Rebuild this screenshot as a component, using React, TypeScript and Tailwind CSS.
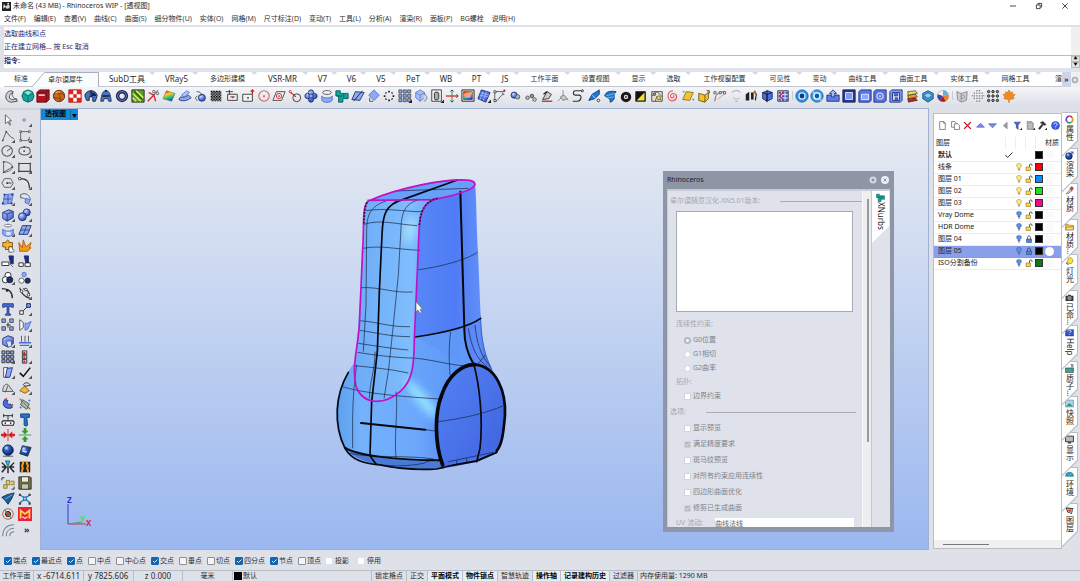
import { useState } from "react";
import clsx from "clsx";

// [path, fill, stroke, stroke width]
type Shape = [string, string, string?, number?];
type IconSet = Record<string, Shape[]>;

const N = "none";
const K = "#222";
const B = "#4a6fd8";
const L = "#8fa9f0";
const D = "#1c2f7a";
const R = "#d8202a";
const G = "#777d88";
const Y = "#f4c430";
const BALL = "url(#ball)";
const BOX = "url(#box)";

const c = (x: number, y: number, r: number) =>
    `M${x - r} ${y}a${r} ${r} 0 1 0 ${2 * r} 0a${r} ${r} 0 1 0 ${-2 * r} 0z`;

const dots = (xs: number[], ys: number[], s: number) =>
    ys.map((y) => xs.map((x) => `M${x} ${y}h${s}v${s}h${-s}z`).join("")).join("");

const TOP_MAIN: IconSet = {
    horn: [["M8 2C3 2 1 5 1 9s3 6 7 6l6-1-1-3-4 1c-3 0-4-1-4-3s1-4 4-4z", "#cdd0d6", "#444"], ["M10 3C7 4 7 9 13 12", N, "#555"]],
    gem: [["M8 1l5 2 2 5-2 5-5 2-5-2-2-5 2-5z", "#17a398", "#0b5d5a"], ["M3 5l5 3 6-3M8 8v7", N, "#0d6f6a"], ["M8 2l4 2-4 3-4-3z", "#7fe8dd"]],
    redbox: [["M1 4l3-3h11v11l-3 3H1z", "#b3121f", "#5e0810"], ["M1 4h11v11M12 4l3-3", N, "#6e0a12"], ["M3 7h7", N, "#fff", 1.5]],
    basketball: [[c(8, 8, 6.5), "#c9681e", "#5b2c0a"], ["M2 6c4-2 8-2 12 1M6 2c3 4 4 8 3 12M2 10c4 0 8 1 10 3", N, "#7a3a0e"], ["M4 5c2-2 4-2 5-1", N, "#f0a860", 1.4]],
    checker: [["M1 1h14v14H1z", "#fff", "#900", 1], [dots([1, 10], [1, 10], 5) + dots([6], [6], 4), "#e0231c"]],
    umbrella: [["M1 8c0-4 4-6 7-6s7 2 7 6l-2 6h-3V9H6v4H3z", "#3f74c9", K], ["M8 2v7", N, K, 1.5], ["M9 4c3 0 5 2 5 4H9z", "#142056"]],
    bell: [["M8 2c4 0 5 4 6 12h-3l-1-3H6l-1 3H2C3 6 4 2 8 2z", "#4b78b8", D], ["M4 8h8", N, "#111", 1.5], [c(8, 2, 1.2), "#123"]],
    ring: [[c(8, 8, 5), N, "#1a2352", 4], [c(8, 8, 5), N, "#7b90d6", 1]],
    stripes: [["M1 1h14v14H1z", "#5a9e2d", "#222"], ["M2 5l9 9M2 10l4 4M6 2l8 8", N, "#e8f26a", 1.5], ["M4 3l9 9", N, "#111", 1]],
    scissors: [["M2 14L9 7l2 7M9 7L3 4", N, R, 1.5], ["M9 7l5-6", N, "#555"], [c(9, 3, 1.5), N, "#555"], [c(13, 5, 1.5), N, "#555"]],
    rainbow: [["M5 2l10 3-4 9L1 11z", "url(#spectrum)", "#555", 0.5]],
    ribbon: [["M1 12c5 3 10 1 14-2l-3-3c-3 2-6 3-9 2z", L, D], ["M4 7l6-5 3 2-6 5z", "#b9c7f5", B]],
    orbit: [[c(9, 10, 4), BALL, D], ["M3 3c4 0 6 2 5 5M4 13c-3-1-3-4 0-5", N, "#444"]],
    weave: [["M2 2h12v12H2z", "#999"], [dots([2, 5, 8, 11], [2, 5, 8, 11], 1.7), "#111"], [dots([3.5, 6.5, 9.5, 12.5], [3.5, 6.5, 9.5, 12.5], 1.5), "#333"]],
    frame: [["M3 6h11v7H3z", "#eee", "#333"], ["M1 3h8M5 1v5M6 9h5", N, "#333"], [c(9, 9.5, 1), R]],
    extrude: [["M2 6h11v8H2z", "#f4f4f4", "#333"], ["M13 6V1M11 3l2-2 2 2", N, R, 1.5], [c(8, 10, 1), K]],
    circle: [[c(8, 8, 6), N, "#c66", 1.2], [c(8, 8, 1), R]],
    diamond: [["M5 3h10l-4 10H1z", "#eee", "#444"], [c(8, 8, 3), N, R], [c(8, 8, 1), R]],
    tangent: [[c(10, 10, 4.5), N, "#333"], ["M2 3l7 6", N, R, 1.5], [c(2.5, 3, 1.3), "#fff", R]],
    flower: [[c(8, 4, 3) + c(4, 8, 3) + c(12, 8, 3) + c(8, 12, 3), BALL, D], [c(8, 8, 2.5), L, D]],
    cylinder: [["M2 8v5c2 3 10 3 12 0V8c-2 3-10 3-12 0z", L, B], ["M3 4c0-3 10-3 10 0s-10 3-10 0z", N, "#555"]],
    pipe: [["M1 2h5v3h9v6H9v4H4V8H1z", "#0fa39b", "#0a5a55"], ["M10 5v5M2 8h6", N, "#0a5a55"]],
    surface: [["M5 3l10 1-5 9L1 12z", L, D], ["M3 14L13 2", N, K, 1]],
    rhomb: [["M8 1l6 6-6 6-6-6z", L, B], ["M3 10v4h4", N, "#444"]],
    ringdots: [["M8 2v2M8 12v2M2 8h2M12 8h2M4 4l1 1M11 11l1 1M12 4l-1 1M4 12l1-1", N, "#222", 2]],
    grid: [[dots([1, 6, 11], [1, 6, 11], 3.5), L, "#333", 0.8], ["M16 12v4h-4z", K]],
    globe: [["M2 4l5-3 5 3v6l-5 4-5-4z", "#aebdf3", B, 0.9], ["M2 4l5 3 5-3M7 7v7", N, B, 0.8], ["M11 6c5 0 5 8 0 8", "#cfd6ee", G]],
    document: [["M2 1h11v13H2z", "#f6f6f6", "#333"], ["M5 5c0-2 5-2 5 0v6c0 2-5 2-5 0z", "#aaa", "#222"], ["M16 12v4h-4z", K]],
    cross: [["M8 1v14", N, "#3aa33a", 1.2], ["M1 8h14", N, R, 1.4], ["M6 3l2-2 2 2M13 6l2 2-2 2M6 13l2 2 2-2", N, "#333"]],
    monitor: [["M1 1h14v13H1z", "#d5d8dc", "#222"], ["M3 3h10v9H3z", "url(#spectrum)", K, 0.5], ["M5 5h6v5H5z", "#ff8fc0"]],
    mesh: [["M5 1l10 3-5 11L1 11z", B, D], ["M3 7l10 2M7 3l-4 10M11 3L7 13M4 4l10 3", N, "#b8c7f8", 0.8], ["M16 12v4h-4z", K]],
    corner: [["M2 3h11M2 3v11M13 6c-6 1-6 8-11 8", N, "#555"], [dots([1], [2, 12], 2.5), "#ddd", K, 0.7], [c(13, 2, 1.3), R], [c(11, 5, 1), B]],
    pebble: [[c(7, 7, 3.5), BALL, D], [c(11, 9, 2.5), "#aeb4c2", "#555"]],
    chain: [[c(4, 10, 2), "#bbb", "#555"], [c(9, 8, 2), "#999", "#444"], [c(12, 12, 2), "#ccc", "#555"]],
    bracket: [["M3 12L8 3l5 3-3 5z", "#ccc", "#333"], ["M2 14h12", N, "#a33", 1.5], ["M8 3l-4 3", N, K, 1.5]],
    axis: [["M8 1v7l-6 6M8 8l6 5", N, "#888"], ["M5 9l4-2 4 4-5 2z", "#ccc", "#777"]],
    scurve: [["M14 2H5c-3 0-3 5 0 5h4c4 0 3 7-2 7H2", N, "#333", 1.3], [c(13, 2, 1.2), "#fff", K]],
    rocket: [["M14 1l-8 5-4 7 7-2 5-5z", "#1f77d0", "#0b3a78"], ["M6 7l4 4", N, "#bfe0ff"], [c(13, 13, 1.5), "#fff", K]],
    fan: [["M2 8c1-5 6-6 13-5-2 2-3 4-2 7-1 4-4 5-5 5 1-4-2-5-6-7z", "#2477c9", "#0d3a75"], ["M3 8l11-3M5 10l8-1", N, "#79b6f0"]],
    disc: [[c(8, 9, 6), "#181818"], [c(8, 9, 2.5), "#ddd"], [c(8, 9, 1), K]],
    contrast: [["M2 3h11v11H2z", "#111", K], ["M3 13L12 4v9z", "#f6e12c"]],
    cells: [["M2 3h12v11H2z", "#e8e4d0", "#444"], ["M2 8l6-5 6 6M6 14l2-6 5 5", N, "#555"], [c(10, 10, 2.2), Y, "#775"], [c(5, 6, 1.5), "#999", "#444"]],
    spiral: [["M8 8c1-1 2 1 0 2s-4-2-2-4 7 0 6 4-7 5-9 1 0-9 5-9", N, "#e0565c", 1.2]],
    yellowpatch: [["M6 3l8 1-4 9-8-1z", Y, "#887010"], [c(3, 3, 1.1) + c(14, 12, 1.1), "#4ab"]],
    yellowbox: [["M2 5l7 2 4-3v7l-4 4-7-2z", Y, "#6b560c"], ["M9 7v8", N, "#6b560c"], ["M11 2h3v3", N, K]],
    points: [["M2 14C3 6 5 4 13 3", N, "#555"], ["M5 12L14 5", N, "#d99"], [dots([1, 7, 12], [3], 2.5), "#eee", K, 0.7]],
    tornado: [["M3 4c3-3 8-3 10 0M5 10c2 2 5 2 7 0M7 14h3", N, "#aab", 1.2]],
    split: [["M2 13V6l4-3v10zM8 12V4h3v8z", "#222"], ["M12 2l2 4-1 7", N, "#222", 1.3], [c(12, 4, 1.5), "#f60"]],
    cube: [["M3 4l6-2 5 2v7l-6 3-5-3z", B, D], ["M3 4l5 2 6-2M8 6v8", N, "#111"], ["M8 1v14", N, "#111", 0.8]],
    matrix: [["M2 2h12v12H2z", "#c9d2f2", "#334"], [dots([3, 7, 11], [3, 7, 11], 2.5), "#3050c0"], ["M9 3l-5 5 5 5", N, R, 1.5]],
};

const TOP_PLUGIN: IconSet = {
    swirl: [[c(8, 8, 7), "#2b8fe3", "#1560b0"], [c(8, 8, 3.5), "#123c78", "#cfe8ff", 1.5]],
    swirlAlt: [[c(8, 8, 7), "#37a0ee", "#1560b0"], [c(8, 8, 3.5), "#185a9c", "#fff", 1.5], ["M3 3l3 3M13 13l-3-3", N, "#bfe4ff", 1.5]],
    upload: [["M1 7h14v7H1z", "#5f7de8", D], ["M8 1l4 4h-2v4H6V5H4z", "#aab9f4", D]],
    frameBlue: [["M1 1h14v14H1z", "#27388f", "#111a55"], ["M4 4h8v8H4z", "#7f98f2", "#dfe6ff", 1]],
    rectBlue: [["M1 3l2-2h12v12l-2 2H1z", "#5774e6", D], ["M4 6h8v6H4z", "#8fa5f6", "#e6ebff", 1]],
    circleBlue: [["M1 3l2-2h12v12l-2 2H1z", "#5774e6", D], [c(8, 8, 3.5), N, "#e6ebff", 1.2], [c(8, 8, 1), "#fff"]],
    saveBlue: [["M1 3l2-2h12v12l-2 2H1z", "#8298f0", D], ["M4 4h8v9H4z", "#dfe5ff", D], ["M6 4v4h4V4M7 10h3v3H7z", B, D, 0.7]],
    layers: [["M3 11l9-1 2 3-10 2z", "#c1272d", K, 0.7], ["M3 7l9-1 2 3-10 2z", "#f0a030", K, 0.7], ["M3 3l9-1 2 3-10 2z", "#f6dd4a", K, 0.7]],
    hex: [["M8 2l6 3v6l-6 4-6-4V5z", "#3c8cc4", "#1b5580"], ["M8 5l4 2-4 3-4-3z", "#8fd0f5"]],
    beachball: [[c(8, 8, 6.5), "#f2f2f2", "#888", 0.5], ["M8 8L8 1.5A6.5 6.5 0 0 1 14 6z", "#59b0e8"], ["M8 8l6-2a6.5 6.5 0 0 1-3 8z", "#f08020"], ["M8 8l3 6a6.5 6.5 0 0 1-7-1z", "#b01830"], ["M8 8l-4 5a6.5 6.5 0 0 1-2-7z", "#3448a8"]],
};

const TOP_EXTRA: IconSet = {
    greybox: [["M2 3l5 2 7-2-1 10-6 2-4-3z", "#c9ccd2", "#888"], ["M7 5v9", N, "#888"], [c(9, 9, 2), N, "#999"]],
    dotcircle: [[dots([6, 9], [1, 13], 1.5) + dots([3, 6, 9, 12], [4, 7, 10], 1.5) + dots([1, 14], [7], 1.2), "#777"]],
    dotgrid: [[c(3, 3, 1.4) + c(8, 3, 1.4) + c(13, 3, 1.4) + c(3, 8, 1.4) + c(8, 8, 1.4) + c(13, 8, 1.4) + c(3, 13, 1.4) + c(8, 13, 1.4) + c(13, 13, 1.4), "#888", "#222", 1]],
    leaf: [["M8 1l2 3 2-1 0 3 3 0-2 3 1 2-5 1-1 4-1-4-5-1 1-2-2-3 3 0 0-3 2 1z", "#ee8a22", "#c86a10", 0.5]],
};

const FLY: Shape = ["M16 12v4h-4z", "#555"];

const SIDE: IconSet = {
    select: [["M5 2v10l3-2 2 4 1-1-2-4h3z", "#fff", "#555"]],
    point: [[c(7, 8, 1.4), "#fff", "#666"], FLY],
    polyline: [["M2 13L6 3l5 6 4 2", N, "#555"], [c(2, 13, 1) + c(6, 3, 1), "#444"], FLY],
    curve: [["M3 3h10M3 3v10M3 13c4 0 10 2 10-4", N, "#555"], [dots([2, 12], [2, 12], 2), "#fff", "#333", 0.7], FLY],
    circleTool: [[c(7, 8, 6), N, "#555", 1.2], ["M7 8l4-3", N, "#333"], FLY],
    ellipse: [["M1 8c0-6 13-6 13 0s-13 6-13 0z", N, "#555", 1.2], [c(7, 8, 1) + c(7, 3.5, 1), "#333"], FLY],
    arc: [["M3 14V2c6 0 10 3 10 6zM3 14c5 0 10-3 10-6", N, "#555"], [c(3, 2, 1) + c(3, 14, 1) + c(13, 8, 1), "#444"], FLY],
    rectangle: [["M1 4h13v9H1z", N, "#444", 1.3], [dots([0, 13], [3, 12], 2), "#555"], FLY],
    polygon: [["M4 3h7l3 5-3 5H4L1 8z", N, "#555"], ["M7 8h5", N, "#333"], [c(7, 8, 1), K], FLY],
    fillet: [["M2 3c8 0 11 3 11 11", N, "#333", 1.4], [c(2, 3, 1.5), "#fff", K], FLY],
    patch: [["M4 3l10-1-2 11-10 1z", L, B], ["M3 8h9M8 3v10", N, D, 0.7], [dots([3, 12], [2], 2) + dots([1, 11], [12], 2), D], FLY],
    revolve: [["M3 3c6-3 11 1 11 6l-5 3c0-4-2-6-6-5z", "#dde3fa", "#555"], ["M9 7l5 2-2 5-4-2z", L, B], FLY],
    boxSolid: [["M2 5l7-3 5 2v7l-7 4-5-3z", BOX, D], ["M2 5l5 2 7-3M7 7v8", N, D, 0.8], FLY],
    sphereSolid: [[c(10, 5, 4), BALL, D], [c(5, 10, 4.5), BALL, D], FLY],
    tube: [["M2 7v6c3 3 9 3 12 0V7c-3 3-9 3-12 0z", L, B], ["M4 3c0-2 8-2 8 0s-8 2-8 0z", "#fff", "#666"], ["M6 10h5v4H6z", "#dde5ff"], FLY],
    quad: [["M5 3h10l-4 10H1z", L, D], ["M3 8h10M10 3L6 13", N, D, 0.8], FLY],
    puzzle: [["M2 4h4c0-4 4-3 3 0h4v5H9v3H5V9H2z", "#f5b431", "#7a4e05"], ["M9 9h4v3c3 0 2 3 0 3H9z", "#fff", "#555"]],
    explode: [["M2 14L1 4l4 6 1-9 3 8 6-5-2 6 2 0-4 4z", "#f59a1b", "#b05e04"]],
    trim: [["M9 1h5v9h-3z", D, D], ["M1 8h8v4H1z", "#fff", K], ["M10 10l4 4", N, "#666"]],
    splitTool: [["M7 1h5v8H9z", D, D], ["M1 9h5v4H1zM8 9h6v4H8z", "#fff", K]],
    booleanUnion: [[c(8, 5, 3.5), "#fff", K], [c(5, 10, 3.5), "#fff", K], [c(10, 10, 3.5), D, K], FLY],
    booleanSplit: [[c(7, 4, 2.5), L, B], [c(4, 11, 3), "#fff", "#555"], [c(11, 11, 3), D, K]],
    blend: [["M1 3c8 0 12 4 12 11", N, "#333", 1.6], [c(7, 5, 1.5), K]],
    match: [["M2 2c2 8 6 11 12 12M6 3c4 1 7 4 7 8", N, "#333", 1.2], [c(4, 6, 1.5) + c(12, 10, 1.5) + c(9, 4, 1.5), "#fff", "#333"], FLY],
    text: [["M2 2h12v4h-2l-1-1H9v8l2 1v1H5v-1l2-1V5H5L4 6H2z", B, D]],
    move: [["M2 10h4v4H2zM10 2h4v4h-4z", "#fff", K], ["M6 10l5-5", N, K], ["M10 2h4v4h-4z", L, D], FLY],
    group: [[dots([1, 10], [1, 10], 4), L, K, 0.8], ["M6 8h5M8 5v6", N, K]],
    align: [["M2 2v12l4-3V5z", "#fff", "#444"], ["M8 6h3l4-2-4 9-3 1z", L, B], FLY],
    extrudeBox: [["M2 5l6-3 6 2v7l-6 4-6-3z", BOX, D], ["M6 8h6v6l-4 1z", "#dce4ff", D, 0.7], FLY],
    project: [["M1 10h14M2 13h11", N, B, 1.5], ["M4 2v7M8 2v7M12 2v7", N, "#555"], FLY],
    array: [[dots([1, 6, 11], [1, 6, 11], 3.5), L, K, 0.9], FLY],
    linearArray: [["M5 1h5v4H5zM5 6h5v4H5zM5 11h5v4H5z", "#fff", K], [dots([6], [2, 7, 12], 2.5), R], FLY],
    shear: [["M3 3h5v11H3z", "#fff", "#444"], ["M7 4l6-1-3 11H5z", L, D], FLY],
    check: [["M2 9l4 4 8-10", N, "#111", 1.8], FLY],
    shell: [["M2 12c0-8 4-9 6-8l6 8H8z", "#d5d5d5", "#555"], ["M5 13l3-8", N, "#555"], FLY],
    cap: [["M2 11l5-5 6 5-5 3z", "#f3b24a", "#8b5a10"], ["M6 4c3-4 8-1 8 1L8 6z", "#ddd", K], FLY],
    bend: [["M4 3c-5 8 4 12 9 9l-2-4c-3 1-5-1-3-4z", B, D], [c(6, 2, 1) + c(13, 9, 1), R]],
    cage: [["M5 3l8 5-3 6-7-5z", "#a8b8a0", "#456"], [c(3, 3, 1.3) + c(13, 13, 1.3), "#c95"], [c(13, 4, 1.2) + c(3, 12, 1.2), B], ["M2 2l12 12", N, B]],
    dimension: [["M3 3h10M3 1v4M13 1v4", N, K], ["M8 3v5", N, K], ["M2 9h12l1 2-1 3H2l-1-3z", "#fff", K, 1.2], [c(5, 11.5, 1) + c(11, 11.5, 1), K]],
    bolt: [["M3 1h10v4h-3l1 9-2 1-2-1V5H3z", "#2277c8", "#0d3f7a"]],
    mirrorRed: [["M8 1v14", N, R], ["M0 8h4M12 8h4", N, R, 3], ["M3 4l5 4-5 4zM13 4L8 8l5 4z", R]],
    mirrorGreen: [["M1 8h14", N, "#2c9a2c"], ["M8 0v4M8 12v4", N, "#2c9a2c", 3], ["M4 3l4 4 4-4zM4 13l4-4 4 4z", "#2c9a2c"]],
    render: [[c(8, 7, 6), "url(#navy)", "#081642"], ["M2 14h12", N, "#555"]],
    renderPatch: [["M5 2l10 2-4 10-9-3z", "url(#navy)", "#234"], ["M5 8l5 1", N, "#cfe0ff", 2]],
    starcut: [["M1 3l5 5-5 6M15 3l-5 5 5 6M8 8v7M1 8h4M11 8h4", N, "#222", 1.6], ["M5 1h5l-2 7z", "#38b5e5", "#177"]],
    zip: [["M2 2h12v12H2z", "#222"], ["M5 2c3 2-2 4 0 6s-2 4 0 6M11 2c-3 2 2 4 0 6s2 4 0 6", N, "#f59a1b", 2.4]],
    sort: [["M1 5V2h3M12 15h3v-3", N, K], ["M6 5h4v5H6z", "#f5c94a", "#775"], ["M11 6h4v4h-4M3 10h4v4H3z", "#f5c94a", "#775"]],
    floppy: [["M1 1h13l1 1v13H1z", "#77764a", K], ["M4 1h8v6H4z", "#ececdc", K, 0.7], ["M4 9h8v6H4z", "#c7c7a5", K, 0.7]],
    bird: [["M1 6l6-3 8-2-3 7-4 6-3-4z", "#1d5f9e", "#0b2d55"], ["M5 8l8-5", N, "#7fc0ee"]],
    curvenet: [["M2 3c4 4 8 4 12 0M2 13c3-5 9-5 12 0M5 5c2 2 2 4 0 5M11 5c-2 2-2 4 0 5", N, "#277fae", 1.4], [dots([1, 12], [2, 12], 2.5), "#444"]],
    target: [[c(8, 8, 6), "#e6e6e6", "#b44"], [c(8, 8, 3), "#d33", "#222"], ["M4 3l8 10", N, "#2a9d6a", 1.4]],
    emblem: [["M0 0h16v16H0z", "#e8213b"], ["M3 13V4l5 4 5-4v9", N, "#ffd94a", 2], ["M5 11l3 2 3-2", N, "#fff", 1.2]],
    pipeCurve: [["M2 15C2 7 6 2 15 2M6 15c0-5 3-9 9-9M10 15c0-3 2-5 5-5", N, "#7d838d", 1.2]],
};

const BULB: Shape[] = [["M8 1c-7 0-5 7-2 8v3h4V9c3-1 5-8-2-8z", "#ffe98a", "#9a7a10"], ["M6 14h4", N, "#555", 1.5]];
const BULB_OFF: Shape[] = [["M8 1c-7 0-5 7-2 8v3h4V9c3-1 5-8-2-8z", "#5b8fe0", "#2a5296"], ["M6 14h4", N, "#555", 1.5]];
const UNLOCK: Shape[] = [["M9 8V4c0-3 5-3 5 0v2", N, "#333", 1.6], ["M2 8h9v7H2z", "#ffd23c", "#7a5a06"]];
const LOCK: Shape[] = [["M5 8V5c0-4 6-4 6 0v3", N, "#234", 1.6], ["M3 8h10v7H3z", "#4a86d0", "#1b3e74"]];

const LAYER_TOOLS: IconSet = {
    newLayer: [["M3 1h7l3 3v11H3z", "#fff", "#333"], ["M10 1v3h3", N, "#333"]],
    copyLayer: [["M1 1h6l3 3v7H1z", "#fff", "#333"], ["M6 5h6l3 3v7H6z", "#fff", "#333"]],
    remove: [["M2 2l12 12M14 2L2 14", N, "#c41620", 2.5]],
    up: [["M1 11l7-7 7 7z", "#7c8ff0", "#38459c"]],
    down: [["M1 5h14l-7 7z", "#7c8ff0", "#38459c"]],
    back: [["M11 2v12L4 8z", "#9a9a9a", "#888"]],
    filter: [["M2 2h11l-4 5v8l-3-3V7z", "#4d68d8", D], ["M16 12v4h-4z", K]],
    report: [["M2 1h8l3 3v11H2z", "#aaa", "#777"], ["M4 6h7M4 9h7M4 12h7", N, "#ddd"], ["M16 12v4h-4z", K]],
    hammer: [["M4 3l5-2 5 5-2 2-2-2-7 9-2-2 7-8z", "#333", "#222"], ["M16 12v4h-4z", K]],
    help: [[c(8, 8, 7), "#3b5bdb", "#20389a"], ["M5 6c0-4 6-3 6 0 0 2-3 2-3 4M8 12v1", N, "#fff", 1.6]],
};

const PANELS: { label: string; icon: Shape[] }[] = [
    { label: "属性", icon: [["M8 2a6 6 0 0 1 5 3", N, "#e33", 3], ["M13 5a6 6 0 0 1-2 8", N, "#e5a11b", 3], ["M11 13a6 6 0 0 1-8-2", N, "#2aa84a", 3], ["M3 11a6 6 0 0 1 5-9", N, "#7a3ad0", 3]] },
    { label: "渲染", icon: [[c(7, 9, 6), "url(#navy)", "#081642"], ["M9 1h6v5z", "#3a64c8"]] },
    { label: "材质", icon: [["M2 14l8-9 3 3-8 6z", "#ccc", "#555"], ["M9 4l3-3 3 3-3 4z", "#d84040", "#722"]] },
    { label: "材质…", icon: [["M1 4h5l2 2h7v8H1z", "#f2c14a", "#85620f"], ["M3 9h13l-2 5H1z", "#ffe08a", "#85620f"]] },
    { label: "灯光", icon: [["M6 2c6-3 11 4 6 9l-5 1-3-2z", "#ffe23c", "#88700a"], ["M2 10l4 4", N, "#666", 2]] },
    { label: "已命…", icon: [["M1 5h4l1-2h4l1 2h4v9H1z", "#333"], [c(8, 9, 3), "#777", "#ddd"]] },
    { label: "Help", icon: [["M1 3h14v11H1z", "#3556c8", D], ["M5 6c0-3 6-3 6 0 0 2-3 2-3 3M8 11v1", N, "#fff", 1.4]] },
    { label: "质子…", icon: [["M1 7h14v8H1z", "#4a9f92", "#233"], ["M10 1h4v5M12 1v5", N, "#222"]] },
    { label: "快照", icon: [["M1 2h14v12H1z", "#a9d6f0", "#667"], ["M2 13l6-6 6 6z", "#2c9b74"]] },
    { label: "显示", icon: [["M1 2h14v10H1z", "#bbb", "#222", 1.5], ["M5 14h6", N, "#222", 2]] },
    { label: "环境", icon: [["M1 11a7 7 0 0 1 14 0z", "#2fa8d8", "#155"], ["M7 11a5 5 0 0 1 8 0z", "#30b060"]] },
    { label: "图层", icon: [["M1 2l14 2-3 10-8-3z", "#222"], ["M4 5l9 1-2 6-5-2z", "#e5482a", "#fff", 1]] },
];

const MENUS = [
    "文件(F)", "编辑(E)", "查看(V)", "曲线(C)", "曲面(S)", "细分物件(U)", "实体(O)", "网格(M)",
    "尺寸标注(D)", "变动(T)", "工具(L)", "分析(A)", "渲染(R)", "面板(P)", "BG螺栓", "说明(H)",
];

const TABS: [string, string][] = [
    ["SubD工具", "w-[56px] text-[8px]"], ["VRay5", "w-[43px] text-[8px]"], ["多边形建模", "w-[59px]"],
    ["VSR-MR", "w-[51px] text-[8px]"], ["V7", "w-[29px] text-[8px]"], ["V6", "w-[29px] text-[8px]"],
    ["V5", "w-[30px] text-[8px]"], ["PeT", "w-[34px] text-[8px]"], ["WB", "w-[32px] text-[8px]"],
    ["PT", "w-[29px] text-[8px]"], ["JS", "w-[28px] text-[8px]"], ["工作平面", "w-[51px]"], ["设置视图", "w-[51px]"],
    ["显示", "w-[35px]"], ["选取", "w-[35px]"], ["工作视窗配置", "w-[67px]"], ["可见性", "w-[44px]"],
    ["变动", "w-[35px]"], ["曲线工具", "w-[51px]"], ["曲面工具", "w-[51px]"], ["实体工具", "w-[51px]"],
    ["网格工具", "w-[51px]"],
];

type Layer = { name: string; color: string; on?: boolean; locked?: boolean; current?: boolean; selected?: boolean };

const LAYERS: Layer[] = [
    { name: "默认", color: "bg-black", current: true },
    { name: "线条", color: "bg-[#ff0000]", on: true },
    { name: "图层 01", color: "bg-[#0a8cff]", on: true },
    { name: "图层 02", color: "bg-[#1fe01f]", on: true },
    { name: "图层 03", color: "bg-[#ff0090]", on: true },
    { name: "Vray Dome", color: "bg-black" },
    { name: "HDR Dome", color: "bg-black" },
    { name: "图层 04", color: "bg-black", locked: true },
    { name: "图层 05", color: "bg-black", locked: true, selected: true },
    { name: "ISO分割备份", color: "bg-[#0b7a12]" },
];

const SNAPS: [string, boolean][] = [
    ["端点", true], ["最近点", true], ["点", true], ["中点", false], ["中心点", false], ["交点", true],
    ["垂点", false], ["切点", false], ["四分点", true], ["节点", true], ["顶点", false],
];

const OPTIONS: [string, boolean][] = [
    ["显示预览", false], ["满足精度要求", true], ["斑马纹预览", false],
    ["对所有约束应用连续性", false], ["四边形曲面优化", false], ["修剪已生成曲面", true],
];

const MODES: [string, boolean][] = [
    ["锁定格点", false], ["正交", false], ["平面模式", true], ["物件锁点", true], ["智慧轨迹", false],
    ["操作轴", true], ["记录建构历史", true], ["过滤器", false],
];

function Icon({ shapes, className = "size-[14px]" }: { shapes: Shape[]; className?: string }) {
    return (
        <svg viewBox="0 0 16 16" className={clsx("shrink-0 overflow-visible", className)} aria-hidden="true">
            {shapes.map(([d, fill, stroke, width], i) => (
                <path key={i} d={d} fill={fill} stroke={stroke ?? "none"} strokeWidth={width ?? 1} />
            ))}
        </svg>
    );
}

function Defs() {
    return (
        <svg className="absolute size-0" aria-hidden="true">
            <defs>
                <radialGradient id="ball" cx="0.35" cy="0.3" r="0.8">
                    <stop offset="0" stopColor="#d5e0ff" />
                    <stop offset="0.5" stopColor="#6484e0" />
                    <stop offset="1" stopColor="#263c96" />
                </radialGradient>
                <radialGradient id="navy" cx="0.35" cy="0.3" r="0.8">
                    <stop offset="0" stopColor="#e8f0ff" />
                    <stop offset="0.3" stopColor="#2f5fc4" />
                    <stop offset="1" stopColor="#071a55" />
                </radialGradient>
                <linearGradient id="box" x1="0" y1="0" x2="1" y2="1">
                    <stop offset="0" stopColor="#b4c5fa" />
                    <stop offset="1" stopColor="#3658c8" />
                </linearGradient>
                <linearGradient id="spectrum" x1="0.2" y1="0" x2="0.6" y2="1">
                    <stop offset="0" stopColor="#e22" />
                    <stop offset="0.35" stopColor="#fc2" />
                    <stop offset="0.65" stopColor="#2c6" />
                    <stop offset="1" stopColor="#23e" />
                </linearGradient>
            </defs>
        </svg>
    );
}

function ToolGroup({ icons, className }: { icons: IconSet; className: string }) {
    return (
        <div className={clsx("flex min-w-0", className)}>
            {Object.entries(icons).map(([name, shapes]) => (
                <button key={name} aria-label={name} className="flex min-w-0 flex-1 items-center justify-center">
                    <Icon shapes={shapes} />
                </button>
            ))}
        </div>
    );
}

function Header() {
    return (
        <header className="bg-white">
            <div className="flex h-3 items-center pl-[2px] pr-3">
                <Icon
                    className="size-[9px]"
                    shapes={[["M0 0h16v16H0z", "#222"], ["M2 12l4-3 2 3 5-1 1-5-4-1-3 3-4-5z", "#ddd"], [c(11, 3, 1.5), "#fff"]]}
                />
                <h1 className="ml-[2px] grow">未命名 (43 MB) - Rhinoceros WIP - [透视图]</h1>
                <div className="flex gap-5">
                    <button aria-label="Minimize"><Icon className="size-[6px]" shapes={[["M0 8h16", N, "#333", 2.4]]} /></button>
                    <button aria-label="Restore"><Icon className="size-[6px]" shapes={[["M1 5h10v10H1zM5 4V1h10v10h-3", N, "#333", 2.4]]} /></button>
                    <button aria-label="Close"><Icon className="size-[6px]" shapes={[["M1 1l14 14M15 1L1 15", N, "#333", 2.4]]} /></button>
                </div>
            </div>
            <nav className="flex h-[13px] items-center gap-[8px] pl-1 font-['Open_Sans','Noto_Sans_CJK_SC',sans-serif]">
                {MENUS.map((m) => (
                    <button key={m}>{m}</button>
                ))}
            </nav>
        </header>
    );
}

function CommandLine() {
    return (
        <section className="flex h-[45px] shrink-0 border-y-2 border-[#dfe2e8] pl-1 text-[#1f2a72]">
            <div className="flex grow flex-col bg-white">
                <div className="flex grow">
                    <div className="grow">
                        <p className="h-[13px] pt-[2px]">选取曲线和点</p>
                        <p className="h-[13px] pt-[2px]">正在建立网格... 按 Esc 取消</p>
                    </div>
                    <div className="w-[9px] bg-[#f0f0f0]" />
                </div>
                <div className="flex h-[13px] border-t border-[#b9bcc2]">
                    <label htmlFor="command" className="font-bold">指令:</label>
                    <input id="command" className="min-w-0 grow outline-none" />
                    <div className="flex w-[9px] flex-col bg-[#e4e4e4] text-[4px] leading-[6px] text-black">
                        <button aria-label="Previous command" className="h-[6px] border border-[#bbb] leading-[4px]">▲</button>
                        <button aria-label="Next command" className="h-[6px] border border-[#bbb] leading-[4px]">▼</button>
                    </div>
                </div>
            </div>
        </section>
    );
}

function ToolTabs() {
    return (
        <div className="flex h-[17px] shrink-0 overflow-hidden border-t-2 border-[#dfe2e8] bg-white pl-1">
            <button className="w-[34px] shrink-0 border-b border-[#c3c7cf]">标准</button>
            <button className="relative -ml-[6px] w-[67px] shrink-0">
                <svg viewBox="0 0 67 15" preserveAspectRatio="none" className="absolute inset-0 size-full" aria-hidden="true">
                    <path d="M0 15L11 2Q12 .500 14 .500H66.500V15" fill="#fafbfc" stroke="#a9afbc" />
                </svg>
                <span className="relative">卓尔谟犀牛</span>
            </button>
            {TABS.map(([label, width]) => (
                <button key={label} className={clsx("relative shrink-0 border-b border-[#c3c7cf]", width)}>
                    {label}
                    <span className="absolute right-0 top-0 h-[3px] w-[6px] bg-[#d5d9e1] [clip-path:polygon(0_0,100%_0,60%_100%)]" />
                </button>
            ))}
            <button className="grow border-b border-[#c3c7cf] text-right">渲</button>
            <button className="w-[9px] shrink-0 bg-[#cfd4ea] font-bold">»</button>
            <button aria-label="Tab options" className="flex w-[9px] shrink-0 items-center bg-[#eef0f4]">
                <Icon className="size-[8px]" shapes={[[c(8, 8, 5), N, "#aaa", 3], [c(8, 8, 1), "#999"]]} />
            </button>
        </div>
    );
}

function Model() {
    const iso = { fill: "none", stroke: "#15213b", strokeWidth: 2 };
    const edge = { fill: "none", stroke: "#05070c", strokeWidth: 6, strokeLinecap: "round" as const };
    const picked = { fill: "none", stroke: "#c310c6", strokeWidth: 5 };
    return (
        <svg viewBox="0 0 600 930" className="absolute left-[279px] top-[56px] h-[310px] w-[200px]" aria-hidden="true">
            <defs>
                <linearGradient id="body" x1="0" y1="0" x2="1" y2="0">
                    <stop offset="0" stopColor="#5ba0ee" />
                    <stop offset="0.15" stopColor="#74b2fb" />
                    <stop offset="0.5" stopColor="#6ba6fb" />
                    <stop offset="0.75" stopColor="#4f7ff4" />
                    <stop offset="1" stopColor="#3c63dc" />
                </linearGradient>
                <linearGradient id="neck" x1="0" y1="0" x2="1" y2="0">
                    <stop offset="0" stopColor="#5f95f8" />
                    <stop offset="0.7" stopColor="#4f7cf5" />
                    <stop offset="0.9" stopColor="#5f8df8" />
                    <stop offset="1" stopColor="#4a72e6" />
                </linearGradient>
                <linearGradient id="front" x1="0" y1="0" x2="1" y2="0">
                    <stop offset="0" stopColor="#6cabf6" />
                    <stop offset="0.7" stopColor="#7fbdfd" />
                    <stop offset="1" stopColor="#6ba6fa" />
                </linearGradient>
                <linearGradient id="disk" x1="0" y1="0" x2="1" y2="1">
                    <stop offset="0" stopColor="#5583f6" />
                    <stop offset="1" stopColor="#3f62dd" />
                </linearGradient>
                <filter id="soft"><feGaussianBlur stdDeviation="12" /></filter>
            </defs>
            <path d="M105 590C60 650 45 700 50 770C55 830 80 860 95 878C180 905 260 915 340 913C420 905 480 890 530 860C560 800 560 700 520 620C490 570 485 520 482 450L300 300H130C115 420 115 540 105 590z" fill="url(#body)" />
            <path d="M145 108C230 70 380 35 463 48C470 70 468 160 474 260L482 460C484 530 495 570 515 612L435 600L285 515L298 180z" fill="url(#neck)" />
            <path d="M284 515C350 508 400 500 434 488C440 540 455 580 462 600C420 605 385 640 365 690L355 770L250 680C275 630 283 560 284 515z" fill="#64a0fa" opacity="0.75" />
            <path d="M145 108C230 75 330 52 430 45C475 45 475 65 430 80C400 92 370 98 345 103z" fill="#66a0f9" />
            <path d="M145 108C125 110 135 170 128 250L118 480C112 560 95 600 108 665C130 720 200 720 240 680C290 640 280 560 284 500L298 180C302 130 320 108 345 103z" fill="url(#front)" />
            <path d="M250 180Q265 165 295 155L285 210Q265 240 255 230z" fill="#b4ecff" opacity="0.7" filter="url(#soft)" />
            <path d="M262 640C290 660 320 690 348 730L343 765C310 735 270 690 256 660z" fill="#9dedff" opacity="0.9" filter="url(#soft)" />
            <path d="M80 852C160 885 280 890 360 885L368 908C260 925 110 900 80 852z" fill="#4a7ad8" />

            <path {...iso} d="M225 78L445 70M138 137C200 128 250 140 305 140M133 178C180 162 230 178 292 182M130 250C180 240 220 252 300 256M123 368C180 365 220 385 278 381M118 467C170 470 210 487 270 485M118 496C170 503 210 515 270 515M115 535C170 543 210 550 265 555M113 562C170 572 230 578 290 580C340 585 390 600 430 602M105 602C160 608 210 612 265 624" />
            <path {...iso} d="M198 108C150 125 140 150 140 200L138 420L130 560M300 103C255 115 245 140 243 190L235 330L220 480L205 620L192 700M165 560C165 620 150 640 148 700" />
            <path {...iso} d="M295 314C350 308 440 285 472 262M392 500C385 550 388 590 390 630M68 665C100 675 160 690 360 702M110 600C95 700 98 780 98 850M228 680C235 740 222 800 228 880M445 490C455 550 470 580 500 605M465 480C470 530 480 570 512 605M495 570L470 602M90 865C150 880 270 870 340 882L310 895C260 905 200 905 165 895" />
            <path {...iso} stroke="#2d4fae" d="M482 460C484 530 495 570 515 612" />

            <path {...edge} strokeWidth={5} d="M412 45L250 103C195 118 188 150 186 210L178 380L172 560L155 710L150 872L168 898" />
            <path {...edge} d="M421 80L433 490C432 540 450 580 462 600" />
            <path {...edge} strokeWidth={5} d="M285 516C340 508 440 490 482 460" />
            <path {...edge} d="M85 622C45 690 40 780 75 850C95 885 130 895 180 900C240 912 310 915 350 912L372 907" strokeWidth={5} />
            <path {...edge} d="M75 848C110 872 230 885 360 886M372 905L470 888L530 862" />
            <path d="M365 895C340 820 345 740 365 690C385 620 430 596 465 599C530 605 558 680 555 750C550 810 545 840 530 860L370 905z" fill="url(#disk)" />
            <path {...edge} strokeWidth={11} d="M368 900C342 830 345 740 365 690C385 630 430 596 465 599" />
            <path {...edge} strokeWidth={8} d="M465 599C530 605 558 680 555 750C550 810 545 840 530 858" />
            <path {...edge} strokeWidth={5} d="M462 600C478 660 490 760 480 850L470 890" />
            <path {...iso} d="M355 770C420 762 500 745 550 722M385 890L520 862M410 885v12M440 880v12" />
            <path {...edge} d="M123 774L316 794" />
            <path {...iso} d="M316 794L345 798" />

            <path {...picked} d="M145 108C230 70 380 38 450 46C480 55 462 72 420 84C390 96 360 100 335 104L145 106z" />
            <path {...picked} d="M145 108C125 120 133 190 128 250L118 480C112 560 95 600 108 665C130 720 190 722 240 680C290 640 280 560 284 500L298 180C302 130 320 108 352 100" />
            <path d="M141 112C133 130 133 150 132 180M298 180C302 130 320 108 352 100" fill="none" stroke="#1a1a1a" strokeWidth="5" strokeDasharray="5 5" />
            <path d="M288 410v30l6-5 6 10 5-3-5-9h8z" fill="#fff" stroke="#666" strokeWidth="2" />
        </svg>
    );
}

function AxisMark() {
    return (
        <svg viewBox="0 0 30 40" className="absolute bottom-[18px] left-[24px] h-[40px] w-[30px] overflow-visible font-bold" aria-hidden="true">
            <path d="M3 13v20" stroke="#3b3fc4" />
            <path d="M3 33h18" stroke="#b23a5c" />
            <path d="M3 33l14-2" stroke="#4c9d6a" />
            <text x="2" y="12" fontSize="8" fill="#2b33d6">Z</text>
            <text x="15" y="31" fontSize="8" fill="#44e04c">Y</text>
            <text x="21" y="35" fontSize="8" fill="#e02438">X</text>
        </svg>
    );
}

function PanelCheck({ label, checked }: { label: string; checked: boolean }) {
    return (
        <label className="flex h-4 items-center gap-[2px] pl-[14px]">
            <span className="relative flex size-[7px]">
                <input
                    type="checkbox"
                    defaultChecked={checked}
                    disabled
                    className="size-[7px] appearance-none rounded-[1px] border border-[#d0d3da] bg-white checked:bg-[#b9bbc0]"
                />
                {checked && <Icon className="absolute left-0 top-0 size-[7px]" shapes={[["M4 8l3 3 5-6", N, "#eee", 1.6]]} />}
            </span>
            {label}
        </label>
    );
}

function FloatingPanel() {
    const [level, setLevel] = useState("G0位置");
    return (
        <aside className="absolute right-[34px] top-[62px] flex h-[361px] w-[231px] flex-col border-x-4 border-b-[5px] border-[#8e95a6] bg-[#dfe2ea] text-[#80838a]">
            <div className="flex h-[18px] shrink-0 items-center gap-1 bg-[#8e95a6] pr-px text-[#1c1f2a]">
                <h2 className="grow">Rhinoceros</h2>
                <button aria-label="Panel options"><Icon className="size-2" shapes={[[c(8, 8, 5), N, "#d5d8e0", 4]]} /></button>
                <button aria-label="Close panel"><Icon className="size-2" shapes={[[c(8, 8, 8), "#eceef3"], ["M5 5l6 6M11 5l-6 6", N, "#8e95a6", 2]]} /></button>
            </div>
            <div className="flex min-h-0 grow border-t-2 border-l border-[#c9cdd7]">
                <div className="min-w-0 grow overflow-hidden pl-[2px]">
                    <div className="flex h-5 items-center gap-5 text-[#a4a7ae]">
                        卓尔谟随意汉化-XN5.01版本:
                        <hr className="grow border-[#a9acb4]" />
                    </div>
                    <div className="ml-[6px] mr-[9px] h-[101px] border border-[#a6a9b0] bg-white" />
                    <fieldset className="pl-[6px] pt-1">
                        <legend className="pt-[7px] text-[#a4a7ae]">连续性约束:</legend>
                        {["G0位置", "G1相切", "G2曲率"].map((item) => (
                            <label key={item} className="flex h-[14px] items-center gap-[2px] pl-2">
                                <input
                                    type="radio"
                                    name="continuity"
                                    checked={level === item}
                                    onChange={() => setLevel(item)}
                                    className="size-[7px] appearance-none rounded-full border border-[#d0d3da] bg-white checked:border-2 checked:border-[#b5b8bd]"
                                />
                                {item}
                            </label>
                        ))}
                        <p className="pt-[2px] text-[#a4a7ae]">拓扑:</p>
                    </fieldset>
                    <div className="pt-px">
                        <PanelCheck label="边界约束" checked={false} />
                    </div>
                    <div className="flex h-4 items-center gap-5 pr-[6px] text-[#a4a7ae]">
                        选项:
                        <hr className="grow border-[#a9acb4]" />
                    </div>
                    {OPTIONS.map(([label, checked]) => (
                        <PanelCheck key={label} label={label} checked={checked} />
                    ))}
                    <div className="flex items-start gap-3 pl-[6px] pr-2 pt-[2px] text-[#a4a7ae]">
                        <label htmlFor="flow" className="shrink-0">UV 流动:</label>
                        <select id="flow" className="h-3 grow appearance-none bg-white text-[#666]">
                            <option>曲线法线</option>
                        </select>
                    </div>
                </div>
                <div className="w-[10px] shrink-0 border-l border-[#f7f8fa] border-r border-r-[#c3c7cf] bg-[#eceef0] pt-2">
                    <div className="ml-[4px] h-[243px] w-[2px] bg-[#999ba0]" />
                </div>
                <div className="w-[18px] shrink-0">
                    <button className="flex h-[52px] w-[17px] flex-col items-center bg-white pt-[2px] text-[8px] text-[#222] [clip-path:polygon(0_0,100%_0,100%_68%,0_100%)]">
                        <Icon className="size-[9px]" shapes={TOP_MAIN.pipe} />
                        <span className="[writing-mode:vertical-rl]">XNurbs</span>
                    </button>
                </div>
            </div>
        </aside>
    );
}

function Viewport() {
    return (
        <main className="relative min-w-0 grow overflow-hidden border border-[#9fb0d0] bg-linear-to-b from-[#eaedf1] to-[#9ab7ef]">
            <div className="flex h-[11px] w-[37px] bg-[#1489d8] text-black">
                <span className="grow text-center font-bold">透视图</span>
                <button className="w-2 border-l border-[#0b6db2] text-[5px]">▼</button>
            </div>
            <Model />
            <AxisMark />
            <FloatingPanel />
        </main>
    );
}

function LayerPanel() {
    return (
        <section className="mb-px mt-[5px] flex w-[129px] shrink-0 flex-col border border-[#b9bdc6] bg-white text-[#222]">
            <div className="flex h-[23px] shrink-0 items-center justify-between pl-1 pr-px">
                {Object.entries(LAYER_TOOLS).map(([name, shapes]) => (
                    <button key={name} aria-label={name}><Icon className="size-[9px]" shapes={shapes} /></button>
                ))}
            </div>
            <table className="w-full table-fixed text-left">
                <thead>
                    <tr className="h-3">
                        <th className="w-[71px] pl-[2px] font-normal">图层</th>
                        <th className="w-[10px] border-l border-[#eee]" />
                        <th className="w-[10px] border-l border-[#eee]" />
                        <th className="w-[10px] border-l border-[#eee]" />
                        <th className="w-[10px] border-l border-[#eee] p-0 whitespace-nowrap" />
                        <th className="p-0 font-normal whitespace-nowrap">材质</th>
                    </tr>
                </thead>
                <tbody>
                    {LAYERS.map((l) => (
                        <tr key={l.name} className={clsx("h-3 border-b", l.selected ? "border-[#8298e4] bg-[#8a9fe9]" : "border-[#ededf0]")}>
                            <td className={clsx("pl-1", l.current && "font-bold")}>{l.name}</td>
                            <td className="p-0">
                                {l.current && <Icon className="size-2" shapes={[["M1 8l4 5L15 3", N, "#222", 1.8]]} />}
                            </td>
                            <td className="p-0">{!l.current && <Icon className="size-2" shapes={l.on ? BULB : BULB_OFF} />}</td>
                            <td className="p-0">{!l.current && <Icon className="size-2" shapes={l.locked ? LOCK : UNLOCK} />}</td>
                            <td className="p-0"><div className={clsx("size-[8px] border border-[#333]", l.color)} /></td>
                            <td className="p-0"><div className={clsx("size-[9px] rounded-full", l.selected ? "bg-white" : "bg-[#fafafa]")} /></td>
                        </tr>
                    ))}
                </tbody>
            </table>
            <div className="mt-auto flex h-[8px] items-center bg-[#f0f0f0] pl-[9px]">
                <div className="h-px w-[46px] bg-[#777]" />
            </div>
        </section>
    );
}

function PanelTabs() {
    return (
        <nav className="mb-3 mt-1 flex w-[18px] shrink-0 flex-col">
            {PANELS.map((p, i) => (
                <div key={p.label} className="relative min-h-0 flex-1" style={{ zIndex: PANELS.length - i }}>
                    <button className="flex h-[45px] w-[16px] flex-col bg-[#b9bdc8] p-px pl-0 [clip-path:polygon(0_0,100%_0,100%_65%,0_100%)]">
                        <span className="flex h-full w-full flex-col items-center gap-px bg-white pt-[2px] [clip-path:polygon(0_0,100%_0,100%_64%,0_99%)]">
                            <Icon className="size-[9px]" shapes={p.icon} />
                            <span className="text-[8px] leading-[8px] text-[#222] [writing-mode:vertical-rl]">{p.label}</span>
                        </span>
                    </button>
                </div>
            ))}
        </nav>
    );
}

function SnapBar() {
    return (
        <div className="flex h-[20px] shrink-0 items-center gap-[5px] pl-1 pt-[2px]">
            {SNAPS.map(([label, checked]) => (
                <label key={label} className="flex items-center gap-px">
                    <span className="relative flex size-2">
                        <input
                            type="checkbox"
                            defaultChecked={checked}
                            className="peer size-2 appearance-none rounded-[1px] border border-[#8d9098] bg-[#f4f5f7] checked:border-[#1264b4] checked:bg-[#1264b4]"
                        />
                        <Icon
                            className="pointer-events-none absolute left-0 top-0 hidden size-2 peer-checked:block"
                            shapes={[["M4 8l3 3 6-6", N, "#fff", 1.8]]}
                        />
                    </span>
                    {label}
                </label>
            ))}
            {["投影", "停用"].map((label) => (
                <label key={label} className="mr-1 flex items-center gap-[3px]">
                    <input type="checkbox" disabled className="size-[6px] appearance-none rounded-[1px] bg-white" />
                    {label}
                </label>
            ))}
        </div>
    );
}

function StatusBar() {
    return (
        <footer className="flex h-[11px] shrink-0 border-t border-[#b9bdc6] leading-[10px]">
            <div className="w-[34px] border-r border-[#b9bdc6] text-center">工作平面</div>
            <div className="w-[50px] border-r border-[#b9bdc6] pl-[3px] text-[8px]">x -6714.611</div>
            <div className="w-[50px] border-r border-[#b9bdc6] pl-1 text-[8px]">y 7825.606</div>
            <div className="w-[49px] border-r border-[#b9bdc6] text-center text-[8px]">z 0.000</div>
            <div className="w-[50px] border-r border-[#b9bdc6] text-center">毫米</div>
            <div className="flex w-[139px] items-center gap-px border-r border-[#b9bdc6] pl-px">
                <div className="size-[8px] bg-black" />
                默认
            </div>
            {MODES.map(([label, active]) => (
                <button key={label} className={clsx("border-r border-[#b9bdc6] px-[3px]", active && "bg-[#e4eff6] font-bold text-black")}>
                    {label}
                </button>
            ))}
            <div className="pl-[2px]">内存使用量: 1290 MB</div>
        </footer>
    );
}

export default function App() {
    return (
        <div className="flex h-screen flex-col overflow-hidden bg-[#dee1e8] font-['Noto_Sans','Noto_Sans_CJK_SC',sans-serif] text-[7px] leading-[10px] text-[#2b2b2b]">
            <Defs />
            <Header />
            <CommandLine />
            <ToolTabs />
            <div className="flex h-[17px] shrink-0 bg-linear-to-b from-[#f4f5f8] to-[#dfe2e9] pl-1">
                <ToolGroup icons={TOP_MAIN} className="flex-[50]" />
                <div className="mx-px my-1 w-px bg-[#c9ccd4]" />
                <ToolGroup icons={TOP_PLUGIN} className="flex-[10]" />
                <div className="mx-px my-1 w-px bg-[#c9ccd4]" />
                <ToolGroup icons={TOP_EXTRA} className="flex-[4]" />
                <div className="flex-[4]" />
            </div>
            <div className="flex min-h-0 grow pt-1">
                <div className="grid w-[40px] shrink-0 auto-rows-fr grid-cols-2 border-t-2 border-[#cdd1da] pb-3 pt-[2px] pr-[7px]">
                    {Object.entries(SIDE).map(([name, shapes]) => (
                        <button key={name} aria-label={name} className="flex min-h-0 items-center justify-center">
                            <Icon shapes={shapes} />
                        </button>
                    ))}
                    <button className="pl-1 text-[9px] font-bold">»</button>
                </div>
                <Viewport />
                <div className="flex shrink-0 pl-1">
                    <LayerPanel />
                    <PanelTabs />
                </div>
            </div>
            <SnapBar />
            <StatusBar />
        </div>
    );
}
